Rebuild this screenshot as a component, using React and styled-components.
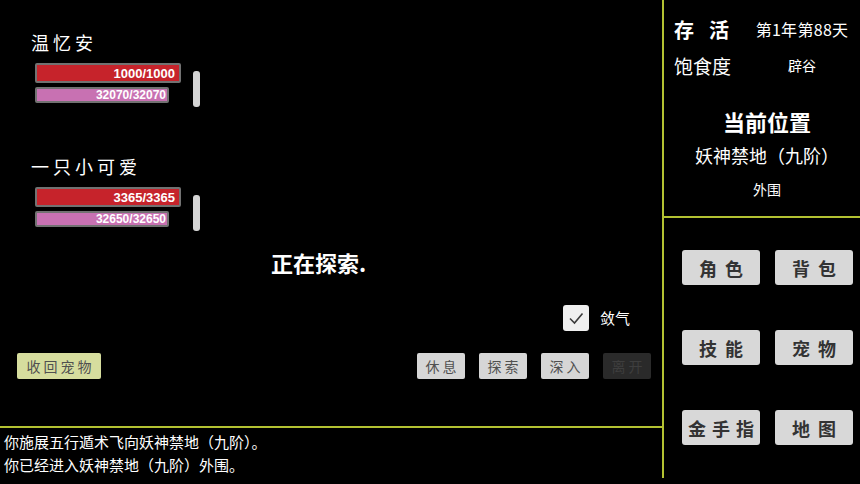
import React from 'react';
import styled, { createGlobalStyle } from 'styled-components';

const GlobalStyle = createGlobalStyle`
  html, body {
    margin: 0;
    padding: 0;
    background: #000;
  }
  body {
    font-family: "Noto Sans CJK SC", "Noto Sans", sans-serif;
    color: #fff;
  }
`;

const LINE = '#b3c232';

const Screen = styled.div`
  display: grid;
  grid-template-columns: 662px 198px;
  width: 860px;
  height: 484px;
  background: #000;
  overflow: hidden;
`;

const LeftCol = styled.div`
  display: flex;
  flex-direction: column;
`;

const Stage = styled.div`
  height: 426px;
  border-bottom: 2px solid ${LINE};
  display: flex;
  flex-direction: column;
`;

const Party = styled.div`
  display: flex;
  flex-direction: column;
  gap: 47px;
  padding: 30px 0 0 31px;
`;

const Member = styled.div`
  display: flex;
  flex-direction: column;
`;

const Name = styled.div`
  font-size: 18px;
  line-height: 24px;
  letter-spacing: 4px;
  margin-bottom: 9px;
`;

const BarsRow = styled.div`
  display: flex;
  align-items: flex-start;
  margin-left: 4px;
`;

const Bars = styled.div`
  display: flex;
  flex-direction: column;
  gap: 4px;
`;

const Bar = styled.div`
  box-sizing: border-box;
  width: ${p => p.$w}px;
  height: ${p => p.$h}px;
  border: 2px solid #727272;
  border-radius: 2px;
  background: ${p => p.$color};
  display: flex;
  align-items: center;
  justify-content: flex-end;
  padding-right: ${p => p.$pad}px;
  font-family: "Liberation Sans", Arial, sans-serif;
  font-weight: 700;
  font-size: ${p => p.$fs}px;
  color: #fff;
`;

const Scroll = styled.div`
  width: 7px;
  height: 36px;
  margin: 8px 0 0 12px;
  border-radius: 3px;
  background: #d4d4d4;
`;

const Status = styled.div`
  margin-top: 16px;
  padding-left: 271px;
  font-size: 22px;
  line-height: 30px;
  font-weight: 700;
`;

const CheckRow = styled.div`
  margin-top: 28px;
  display: flex;
  justify-content: flex-end;
  align-items: center;
  gap: 11px;
  padding-right: 32px;
`;

const CheckBox = styled.div`
  width: 26px;
  height: 26px;
  border-radius: 3px;
  background: #efefef;
  display: flex;
  align-items: center;
  justify-content: center;
`;

const CheckLabel = styled.span`
  font-size: 15px;
  line-height: 20px;
`;

const ActionRow = styled.div`
  margin-top: 22px;
  display: flex;
  justify-content: space-between;
  align-items: center;
  padding: 0 11px 0 17px;
`;

const Actions = styled.div`
  display: flex;
  gap: 14px;
`;

const SmallButton = styled.button`
  box-sizing: border-box;
  width: ${p => p.$w || 48}px;
  height: 26px;
  border: none;
  border-radius: 2px;
  padding: 0 0 0 3px;
  background: ${p => (p.$pet ? '#d6dd9e' : p.disabled ? '#2a2a2a' : '#d6d6d6')};
  color: ${p => (p.disabled ? '#3e3e3e' : '#505050')};
  font-family: inherit;
  font-size: 14px;
  letter-spacing: 3px;
  line-height: 26px;
  text-align: center;
`;

const Log = styled.div`
  padding: 2px 0 0 4px;
  font-size: 15px;
  line-height: 23px;
`;

const RightCol = styled.div`
  align-self: start;
  height: 478px;
  border-left: 2px solid ${LINE};
  display: flex;
  flex-direction: column;
`;

const Info = styled.div`
  box-sizing: border-box;
  height: 218px;
  border-bottom: 2px solid ${LINE};
  padding-top: 14px;
  display: flex;
  flex-direction: column;
  gap: 6px;
`;

const InfoRow = styled.div`
  display: grid;
  grid-template-columns: 70px 1fr;
  align-items: center;
  height: 30px;
  padding-left: 10px;
`;

const InfoLabel = styled.span`
  font-size: ${p => p.$fs}px;
  font-weight: ${p => (p.$bold ? 700 : 400)};
  letter-spacing: ${p => p.$ls || 0}px;
  white-space: nowrap;
`;

const InfoValue = styled.span`
  text-align: center;
  font-size: ${p => p.$fs}px;
  letter-spacing: ${p => p.$ls || 0}px;
  white-space: nowrap;
`;

const Location = styled.div`
  margin-top: 18px;
  padding-left: 10px;
  display: flex;
  flex-direction: column;
  align-items: center;
`;

const LocLine = styled.div`
  font-size: ${p => p.$fs}px;
  font-weight: ${p => (p.$bold ? 700 : 400)};
  line-height: 34px;
  white-space: nowrap;
`;

const Menu = styled.div`
  display: grid;
  grid-template-columns: 78px 78px;
  grid-auto-rows: 35px;
  column-gap: 15px;
  row-gap: 45px;
  padding: 32px 0 0 18px;
`;

const MenuButton = styled.button`
  border: none;
  border-radius: 3px;
  background: #d8d8d8;
  color: #333;
  font-family: inherit;
  font-size: 18px;
  font-weight: 700;
  letter-spacing: ${p => p.$ls || 8}px;
  padding: 0 0 0 ${p => p.$ls || 8}px;
  white-space: nowrap;
`;

const members = [
  { name: '温忆安', hp: '1000/1000', mp: '32070/32070' },
  { name: '一只小可爱', hp: '3365/3365', mp: '32650/32650' },
];

function CheckMark() {
  return (
    <svg width="26" height="26" viewBox="0 0 26 26">
      <path d="M7 13.5 L11.5 18 L19.5 8.5" fill="none" stroke="#3a3a3a" strokeWidth="1.6" />
    </svg>
  );
}

export default function App() {
  return (
    <>
      <GlobalStyle />
      <Screen>
        <LeftCol>
          <Stage>
            <Party>
              {members.map(m => (
                <Member key={m.name}>
                  <Name>{m.name}</Name>
                  <BarsRow>
                    <Bars>
                      <Bar $w={146} $h={20} $color="#c6232b" $pad={4} $fs={13}>{m.hp}</Bar>
                      <Bar $w={134} $h={16} $color="#c871b2" $pad={1} $fs={12}>{m.mp}</Bar>
                    </Bars>
                    <Scroll />
                  </BarsRow>
                </Member>
              ))}
            </Party>
            <Status>正在探索.</Status>
            <CheckRow>
              <CheckBox><CheckMark /></CheckBox>
              <CheckLabel>敛气</CheckLabel>
            </CheckRow>
            <ActionRow>
              <SmallButton $pet $w={84}>收回宠物</SmallButton>
              <Actions>
                <SmallButton>休息</SmallButton>
                <SmallButton>探索</SmallButton>
                <SmallButton>深入</SmallButton>
                <SmallButton disabled>离开</SmallButton>
              </Actions>
            </ActionRow>
          </Stage>
          <Log>
            <div>你施展五行遁术飞向妖神禁地（九阶）。</div>
            <div>你已经进入妖神禁地（九阶）外围。</div>
          </Log>
        </LeftCol>
        <RightCol>
          <Info>
            <InfoRow>
              <InfoLabel $fs={20} $bold $ls={15}>存活</InfoLabel>
              <InfoValue $fs={16} $ls={0.3}>第1年第88天</InfoValue>
            </InfoRow>
            <InfoRow>
              <InfoLabel $fs={19}>饱食度</InfoLabel>
              <InfoValue $fs={14}>辟谷</InfoValue>
            </InfoRow>
            <Location>
              <LocLine $fs={22} $bold>当前位置</LocLine>
              <LocLine $fs={18}>妖神禁地（九阶）</LocLine>
              <LocLine $fs={14}>外围</LocLine>
            </Location>
          </Info>
          <Menu>
            <MenuButton>角色</MenuButton>
            <MenuButton>背包</MenuButton>
            <MenuButton>技能</MenuButton>
            <MenuButton>宠物</MenuButton>
            <MenuButton $ls={6}>金手指</MenuButton>
            <MenuButton>地图</MenuButton>
          </Menu>
        </RightCol>
      </Screen>
    </>
  );
}
